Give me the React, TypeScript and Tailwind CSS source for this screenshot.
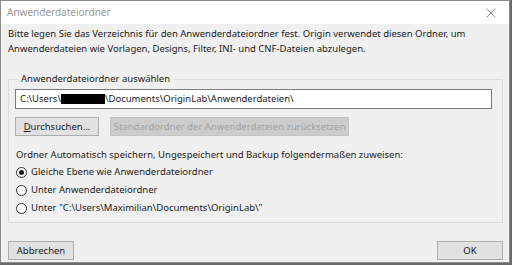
const font = { fontFamily: '"Noto Sans", "Open Sans", sans-serif' };

function Radio({ checked, label }: { checked?: boolean; label: string }) {
  return (
    <div className="h-[18px] flex items-center gap-[4px]">
      <span className="w-[11px] h-[11px] rounded-full border border-[#333] bg-white flex items-center justify-center">
        {checked && <span className="w-[5px] h-[5px] rounded-full bg-[#1a1a1a]" />}
      </span>
      <span>{label}</span>
    </div>
  );
}

export default function App() {
  return (
    <div className="w-[512px] h-[265px] bg-[#6a6a6a] text-[9.5px] text-[#1a1a1a]" style={font}>
      <div className="w-[510px] h-[263px] border border-[#8c8c8c] bg-[#f0f0f0] flex flex-col">
        {/* Title bar */}
        <div className="h-[23px] bg-white flex items-center justify-between pl-[6px] pr-[13px] shrink-0">
          <span className="text-[#9a9a9a] text-[10px]">Anwenderdateiordner</span>
          <svg width="10" height="10" viewBox="0 0 10 10">
            <path d="M0.5 0.5 L9.5 9.5 M9.5 0.5 L0.5 9.5" stroke="#8a8a8a" strokeWidth="1" />
          </svg>
        </div>

        <div className="flex flex-col px-[7px] pr-[6px]">
          <p className="leading-[15px] pt-[2px]">
            Bitte legen Sie das Verzeichnis für den Anwenderdateiordner fest. Origin verwendet diesen Ordner, um
            <br />
            Anwenderdateien wie Vorlagen, Designs, Filter, INI- und CNF-Dateien abzulegen.
          </p>

          <fieldset className="mt-[16px] border border-[#dcdcdc] pl-[6px] pr-[10px] pb-[5px] min-w-0">
            <legend className="ml-[3px] px-[3px] leading-[14px]">Anwenderdateiordner auswählen</legend>

            <div className="mt-[3px] h-[20px] border border-[#7a7a7a] bg-white flex items-center pl-[4px]">
              <span>C:\Users\</span>
              <span className="w-[44px] h-[10px] bg-black" />
              <span>\Documents\OriginLab\Anwenderdateien\</span>
            </div>

            <div className="mt-[8px] flex gap-[11px]">
              <button className="w-[84px] h-[19px] border border-[#adadad] bg-[#e1e1e1] leading-none">
                <span className="underline">D</span>urchsuchen...
              </button>
              <button className="w-[239px] h-[19px] border border-[#c4c4c4] bg-[#cccccc] text-[#a3a3a3] leading-none">
                Standardordner der Anwenderdateien zurücksetzen
              </button>
            </div>

            <div className="mt-[12px] leading-[14px] pl-[1px]">
              Ordner Automatisch speichern, Ungespeichert und Backup folgendermaßen zuweisen:
            </div>
            <div className="flex flex-col pl-[1px] mt-[1px]">
              <Radio checked label="Gleiche Ebene wie Anwenderdateiordner" />
              <Radio label="Unter Anwenderdateiordner" />
              <Radio label='Unter "C:\Users\Maximilian\Documents\OriginLab\"' />
            </div>
          </fieldset>

          <div className="mt-[18px] flex justify-between">
            <button className="w-[66px] h-[19px] border border-[#adadad] bg-[#e1e1e1] leading-none">Abbrechen</button>
            <button className="w-[66px] h-[19px] border border-[#adadad] bg-[#e1e1e1] leading-none">OK</button>
          </div>
        </div>
      </div>
    </div>
  );
}
